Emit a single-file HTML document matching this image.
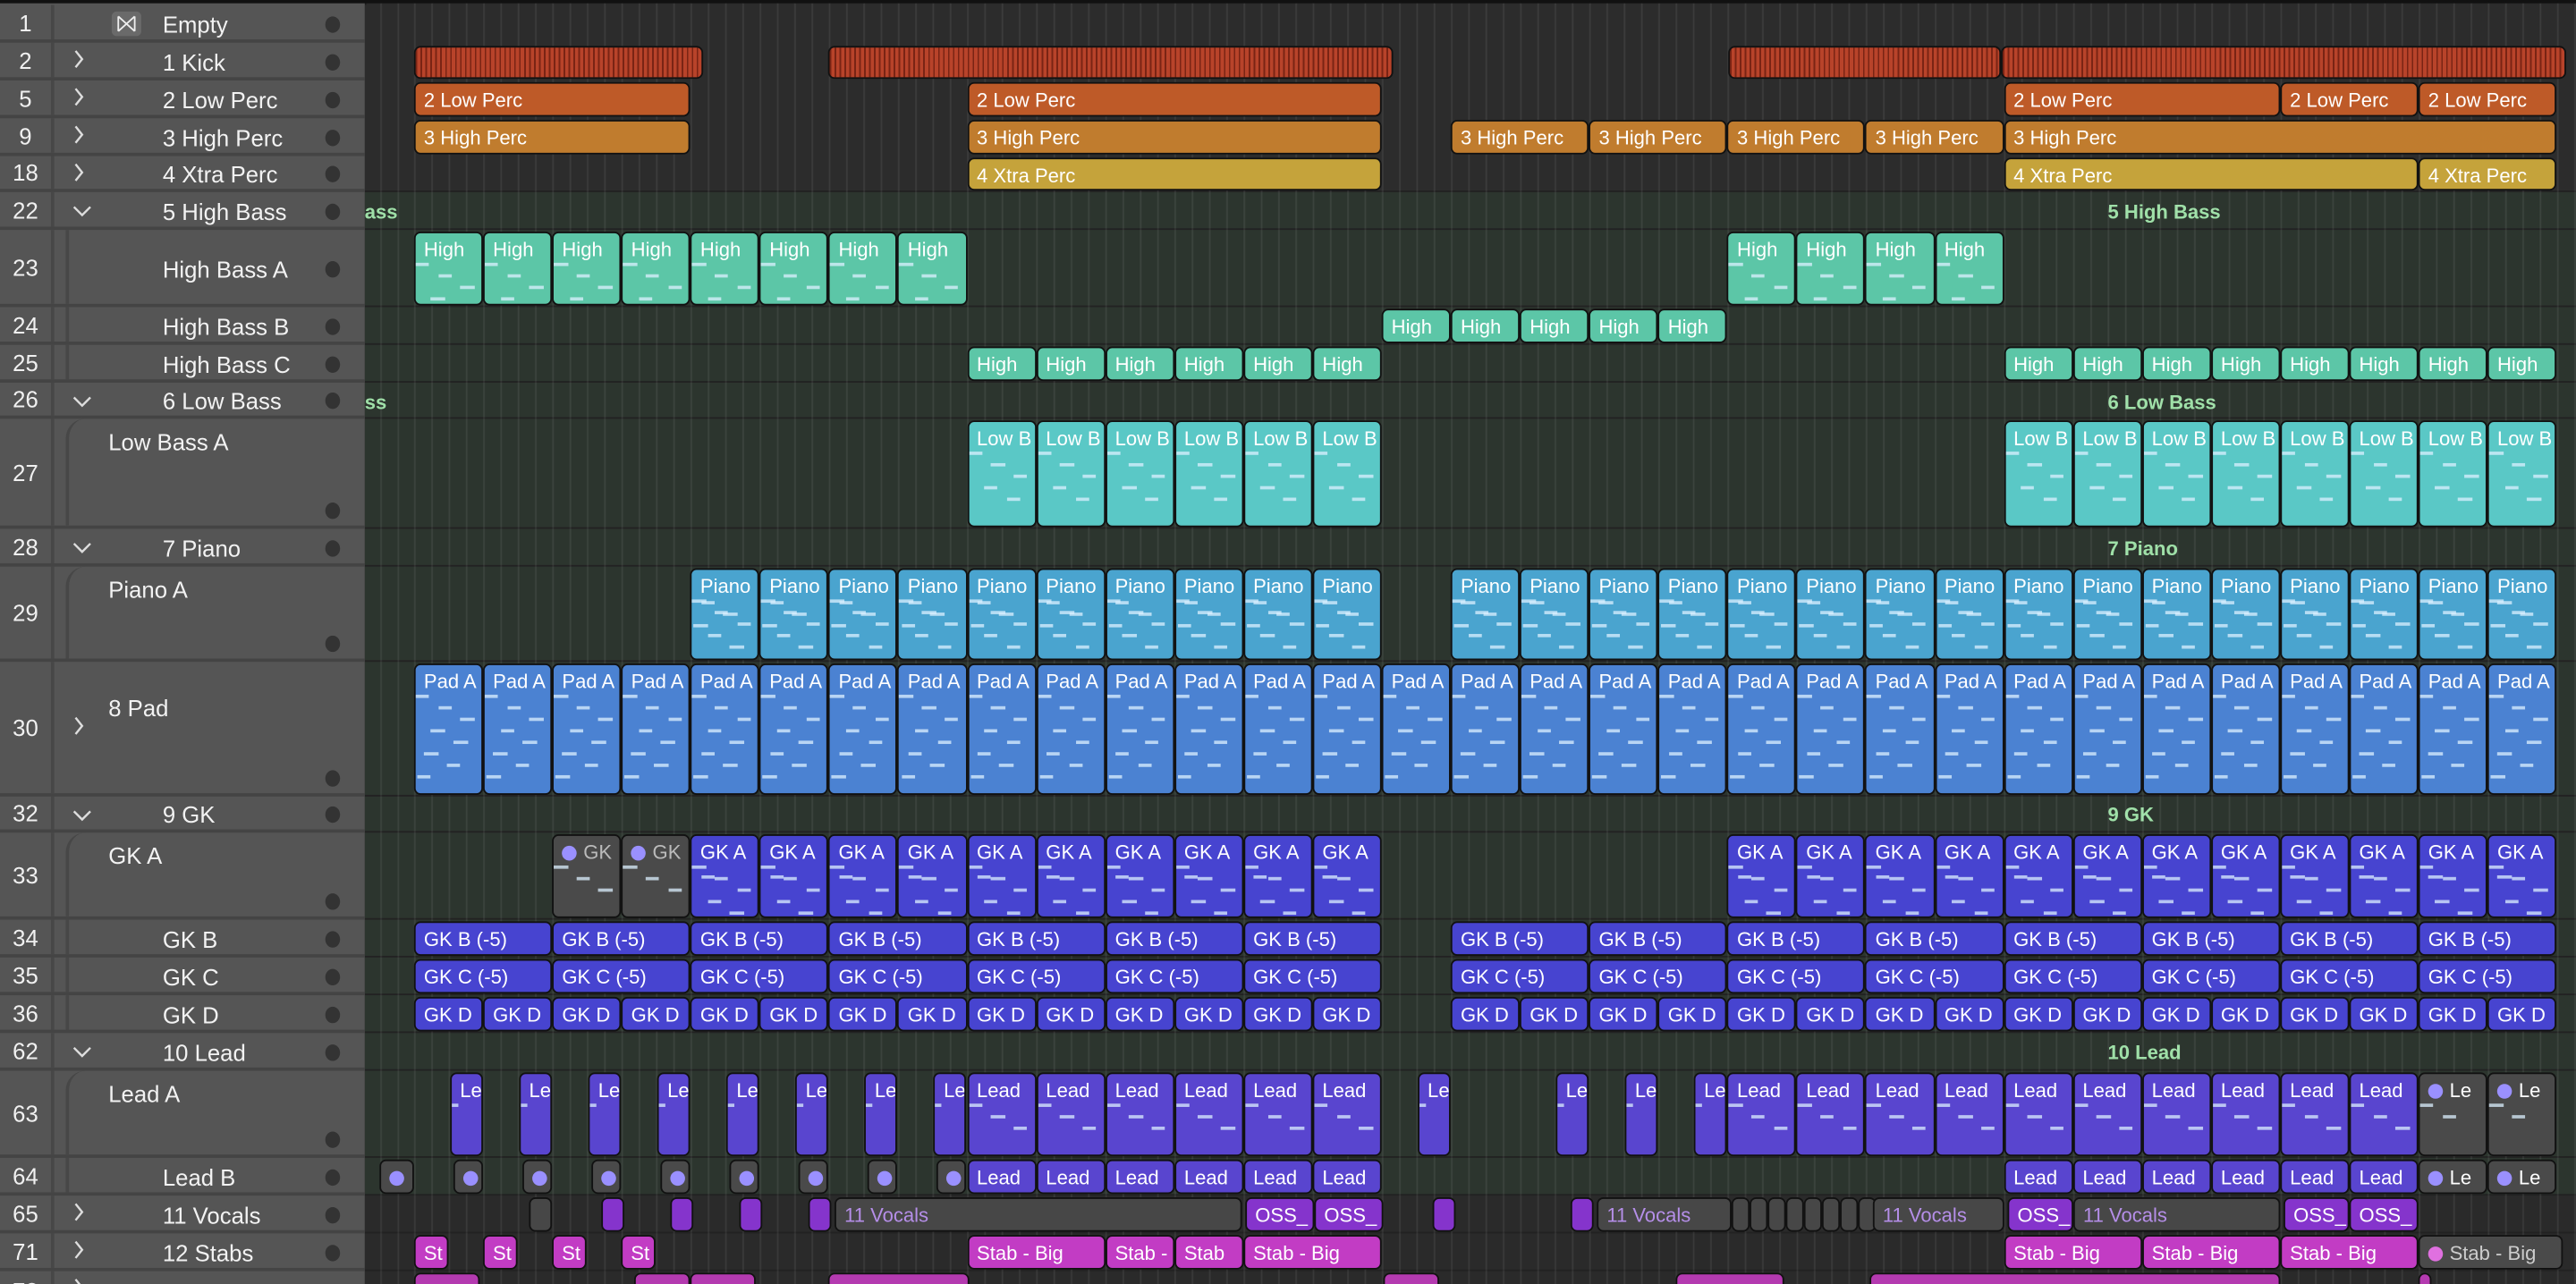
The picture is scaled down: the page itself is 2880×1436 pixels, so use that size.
<!DOCTYPE html>
<html><head><meta charset="utf-8">
<style>
html,body{margin:0;padding:0;background:#2a2a2a;overflow:hidden;width:2880px;height:1436px}
#w{position:absolute;left:0;top:0;width:1568px;height:782px;transform:scale(1.83673);transform-origin:0 0;font-family:"Liberation Sans",sans-serif;overflow:hidden;background:#2b2b2b}
.lp{position:absolute;left:0;top:0;width:222px;height:782px;background:#555}
.row{position:absolute;left:0;width:222px;border-bottom:2px solid #444;box-sizing:border-box}
.num{position:absolute;left:0;top:0;width:31px;height:100%;border-right:2px solid #474747;color:#f0f0f0;font-size:14px;display:flex;align-items:center;justify-content:center}
.nm{position:absolute;color:#f2f2f2;font-size:14px;white-space:nowrap}
.dot{position:absolute;left:198px;width:9px;height:10px;border-radius:50%;background:#333}
.chev{position:absolute;left:44px;color:#e0e0e0;font-size:12px}
.ta{position:absolute;left:222px;top:0;width:1346px;height:782px;background-color:#2b2b2b;border-left:1px solid #1e1e1e}
.band{position:absolute;left:222px;width:1346px}
.grid{position:absolute;left:222px;top:0;width:1346px;height:782px;background-image:repeating-linear-gradient(90deg,rgba(255,255,255,0.07) 0 1px,transparent 1px 10.52px);background-position:30px 0}
.c{position:absolute;box-sizing:border-box;border:1.5px solid #111;border-radius:4px;color:#fff;font-size:12px;padding:3px 0 0 5px;white-space:nowrap;overflow:hidden;line-height:14px}
.gl{position:absolute;color:#9fe0a8;font-size:12px;font-weight:bold}
.n{position:absolute;height:2px;background:rgba(220,240,255,0.75)}
.gdot{display:inline-block;width:9px;height:9px;border-radius:50%;background:#9a90ff;margin-right:4px;vertical-align:-1px}
</style></head><body><div id="w">
<div class="ta"></div>
<div id="bands"></div>
<div class="grid"></div>
<div id="clips"></div>
<div class="lp" id="lp"></div>
<div style="position:absolute;left:0;top:0;width:1568px;height:2px;background:#111"></div>
</div>
<script>
var rows=[
[1,3,26,'Empty',99,0,'x'],
[2,26,49,'1 Kick',99,0,'>'],
[5,49,72,'2 Low Perc',99,0,'>'],
[9,72,95,'3 High Perc',99,0,'>'],
[18,95,117,'4 Xtra Perc',99,0,'>'],
[22,117,140,'5 High Bass',99,0,'v'],
[23,140,187,'High Bass A',99,1,''],
[24,187,210,'High Bass B',99,1,''],
[25,210,233,'High Bass C',99,1,''],
[26,233,255,'6 Low Bass',99,0,'v'],
[27,255,322,'Low Bass A',66,2,''],
[28,322,345,'7 Piano',99,0,'v'],
[29,345,403,'Piano A',66,2,''],
[30,403,485,'8 Pad',66,3,'>'],
[32,485,507,'9 GK',99,0,'v'],
[33,507,560,'GK A',66,2,''],
[34,560,583,'GK B',99,1,''],
[35,583,606,'GK C',99,1,''],
[36,606,629,'GK D',99,1,''],
[62,629,652,'10 Lead',99,0,'v'],
[63,652,705,'Lead A',66,2,''],
[64,705,728,'Lead B',99,1,''],
[65,728,751,'11 Vocals',99,0,'>'],
[71,751,774,'12 Stabs',99,0,'>'],
[73,774,800,'13 FX',99,0,'>']];
var lp='',bands='';
rows.forEach(function(r){
 var h=r[2]-r[1];
 lp+='<div class="row" style="top:'+r[1]+'px;height:'+h+'px"><div class="num">'+r[0]+'</div>';
 if(r[5]==1||r[5]==2) lp+='<div style="position:absolute;left:40px;top:0;width:182px;height:100%;border-left:2px solid #474747;'+(r[5]==2?'border-top-left-radius:12px;':'')+'"></div>';
 if(r[6]=='>') lp+='<div class="chev" style="top:'+(r[5]==3?h/2-8:4)+'px">&#x203A;</div>'.replace('&#x203A;','<svg width="8" height="12" viewBox="0 0 8 12"><path d="M2 1l4 5-4 5" stroke="#ddd" stroke-width="1.3" fill="none"/></svg>');
 if(r[6]=='v') lp+='<div class="chev" style="top:5px"><svg width="12" height="8" viewBox="0 0 12 8"><path d="M1 1l5 5 5-5" stroke="#ddd" stroke-width="1.3" fill="none"/></svg></div>';
 if(r[6]=='x') lp+='<div style="position:absolute;left:68px;top:4px;width:18px;height:15px;border-radius:3px;background:#6a6a6a"><svg width="18" height="15" viewBox="0 0 18 15"><path d="M4 3v9M14 3v9M4 3l10 9M14 3l-10 9" stroke="#eee" stroke-width="1" fill="none"/></svg></div>';
 var ty=r[5]==2?6:(r[5]==3?20:(h/2-8));
 lp+='<div class="nm" style="left:'+r[4]+'px;top:'+ty+'px">'+r[3]+'</div>';
 var dy=(r[5]==2||r[5]==3)?h-16:h/2-5;
 lp+='<div class="dot" style="top:'+dy+'px"></div>';
 lp+='</div>';
});
document.getElementById('lp').innerHTML=lp;
// bands
function band(t,b,c){bands+='<div class="band" style="top:'+t+'px;height:'+(b-t)+'px;background:'+c+'"></div>';}
band(117,485,'#2c352e');band(485,728,'#2c352e');band(728,782,'#2a2a2a');
band(3,117,'#2c2c2c');
bands+='<div class="gl" style="left:222px;top:122px">ass</div><div class="gl" style="left:1283px;top:122px">5 High Bass</div>';
bands+='<div class="gl" style="left:222px;top:238px">ss</div><div class="gl" style="left:1283px;top:238px">6 Low Bass</div>';
bands+='<div class="gl" style="left:1283px;top:327px">7 Piano</div>';
bands+='<div class="gl" style="left:1283px;top:489px">9 GK</div>';
bands+='<div class="gl" style="left:1283px;top:634px">10 Lead</div>';
[117,140,187,210,233,255,322,345,403,485,507,560,583,606,629,652,705,728,751,774].forEach(function(y){bands+='<div class="band" style="top:'+(y-1)+'px;height:1px;background:#222"></div>';});
document.getElementById('bands').innerHTML=bands;
var B=function(n){return 252+42.07*n;};
var out='';
function clip(x1,x2,t,b,col,label,notes,extra){
 out+='<div class="c" style="left:'+x1+'px;top:'+(t+1)+'px;width:'+(x2-x1)+'px;height:'+(b-t-2)+'px;background:'+col+';'+(extra||'')+'">'+label;
 if(notes){var hh=b-t;for(var i=0;i<notes;i++){var yy=18+((i*7)%(hh-24));var xx=((i*13)%30);out+='<div class="n" style="left:'+(xx*(x2-x1)/40)+'px;top:'+yy+'px;width:'+((x2-x1)/5)+'px"></div>';}}
 out+='</div>';
}
function bars(a,z,len,t,b,col,label,notes,extra){for(var i=a;i<z;i+=len)clip(B(i),B(i+len),t,b,col,label,notes,extra);}
// Kick
var kick='background:#b8432a repeating-linear-gradient(90deg,#7a2414 0 1px,transparent 1px 3px);';
clip(252,428,27,49,'',' ',0,kick);clip(504,848,27,49,'',' ',0,kick);clip(1052,1218,27,49,'',' ',0,kick);clip(1218,1562,27,49,'',' ',0,kick);
// Low Perc
var lpc='#be5a28';clip(B(0),B(4),49,72,lpc,'2 Low Perc');clip(B(8),B(14),49,72,lpc,'2 Low Perc');clip(B(23),B(27),49,72,lpc,'2 Low Perc');clip(B(27),B(29),49,72,lpc,'2 Low Perc');clip(B(29),B(31),49,72,lpc,'2 Low Perc');
var hp='#c07c2e';clip(B(0),B(4),72,95,hp,'3 High Perc');clip(B(8),B(14),72,95,hp,'3 High Perc');bars(15,23,2,72,95,hp,'3 High Perc');clip(B(23),B(31),72,95,hp,'3 High Perc');
var xp='#c5a33b';clip(B(8),B(14),95,117,xp,'4 Xtra Perc');clip(B(23),B(29),95,117,xp,'4 Xtra Perc');clip(B(29),B(31),95,117,xp,'4 Xtra Perc');
var tl='#5cc6a7';bars(0,8,1,140,187,tl,'High',4);bars(19,23,1,140,187,tl,'High',4);
bars(14,19,1,187,210,tl,'High');bars(8,14,1,210,233,tl,'High');bars(23,31,1,210,233,tl,'High');
var lb='#5ac8c6';bars(8,14,1,255,322,lb,'Low B',5);bars(23,31,1,255,322,lb,'Low B',5);
var pi='#4aa4cf';bars(4,14,1,345,403,pi,'Piano',8);bars(15,31,1,345,403,pi,'Piano',8);
var pd='#4b82d2';bars(0,31,1,403,485,pd,'Pad A',8);
var gk='#4744d0',gg='#4a4a4a';
clip(B(2),B(3),507,560,gg,'<span class="gdot"></span><span style="color:#bbb">GK</span>',3);clip(B(3),B(4),507,560,gg,'<span class="gdot"></span><span style="color:#bbb">GK</span>',3);
bars(4,14,1,507,560,gk,'GK A',6);bars(19,31,1,507,560,gk,'GK A',6);
bars(0,14,2,560,583,gk,'GK B (-5)');bars(15,31,2,560,583,gk,'GK B (-5)');
bars(0,14,2,583,606,gk,'GK C (-5)');bars(15,31,2,583,606,gk,'GK C (-5)');
bars(0,14,1,606,629,gk,'GK D');bars(15,31,1,606,629,gk,'GK D');
var ld='#5945cf';
[0,1,2,3,4,5,6,7,14,16,17,18].forEach(function(b){clip(B(b)+22,B(b)+42,652,705,ld,'Le',1);});
bars(8,14,1,652,705,ld,'Lead',3);bars(19,29,1,652,705,ld,'Lead',3);
clip(B(29),B(30),652,705,gg,'<span class="gdot"></span>Le',2);clip(B(30),B(31),652,705,gg,'<span class="gdot"></span>Le',2);
clip(231,252,705,728,gg,'<span class="gdot"></span>');
[0,1,2,3,4,5,6,7].forEach(function(b){clip(B(b)+24,B(b)+42,705,728,gg,'<span class="gdot"></span>');});
bars(8,14,1,705,728,ld,'Lead');bars(23,29,1,705,728,ld,'Lead');
clip(B(29),B(30),705,728,gg,'<span class="gdot"></span>Le');clip(B(30),B(31),705,728,gg,'<span class="gdot"></span>Le');
var vc='#8534cc',vg='#474747';
clip(322,336,728,751,vg,'');[366,408,450,492,872,956].forEach(function(x){clip(x,x+14,728,751,vc,'');});
clip(508,756,728,751,vg,'<span style="color:#b58ee8">11 Vocals</span>');
clip(758,800,728,751,vc,'OSS_');clip(800,842,728,751,vc,'OSS_');
clip(972,1054,728,751,vg,'<span style="color:#b58ee8">11 Vocals</span>');
for(var x=1054;x<1138;x+=11)clip(x,x+11,728,751,vg,'');
clip(1140,1220,728,751,vg,'<span style="color:#b58ee8">11 Vocals</span>');
clip(1222,1262,728,751,vc,'OSS_');clip(1262,1388,728,751,vg,'<span style="color:#b58ee8">11 Vocals</span>');
clip(1390,1430,728,751,vc,'OSS_');clip(1430,1472,728,751,vc,'OSS_');
var st='#c23cc4';
[252,294,336,378].forEach(function(x){clip(x,x+21,751,774,st,'St');});
clip(B(8),B(10),751,774,st,'Stab - Big');clip(B(10),B(11),751,774,st,'Stab -');clip(B(11),B(12),751,774,st,'Stab');clip(B(12),B(14),751,774,st,'Stab - Big');
clip(B(23),B(25),751,774,st,'Stab - Big');clip(B(25),B(27),751,774,st,'Stab - Big');clip(B(27),B(29),751,774,st,'Stab - Big');
clip(B(29),B(31)+4,751,774,gg,'<span class="gdot" style="background:#e070e0"></span><span style="color:#ccc">Stab - Big</span>');
var fx='#b43ab0';
[[252,292],[386,420],[420,460],[504,590],[842,876],[1020,1086],[1138,1388],[1472,1480]].forEach(function(p){clip(p[0],p[1],774,800,fx,'');});
document.getElementById('clips').innerHTML=out;
</script>
</body></html>
